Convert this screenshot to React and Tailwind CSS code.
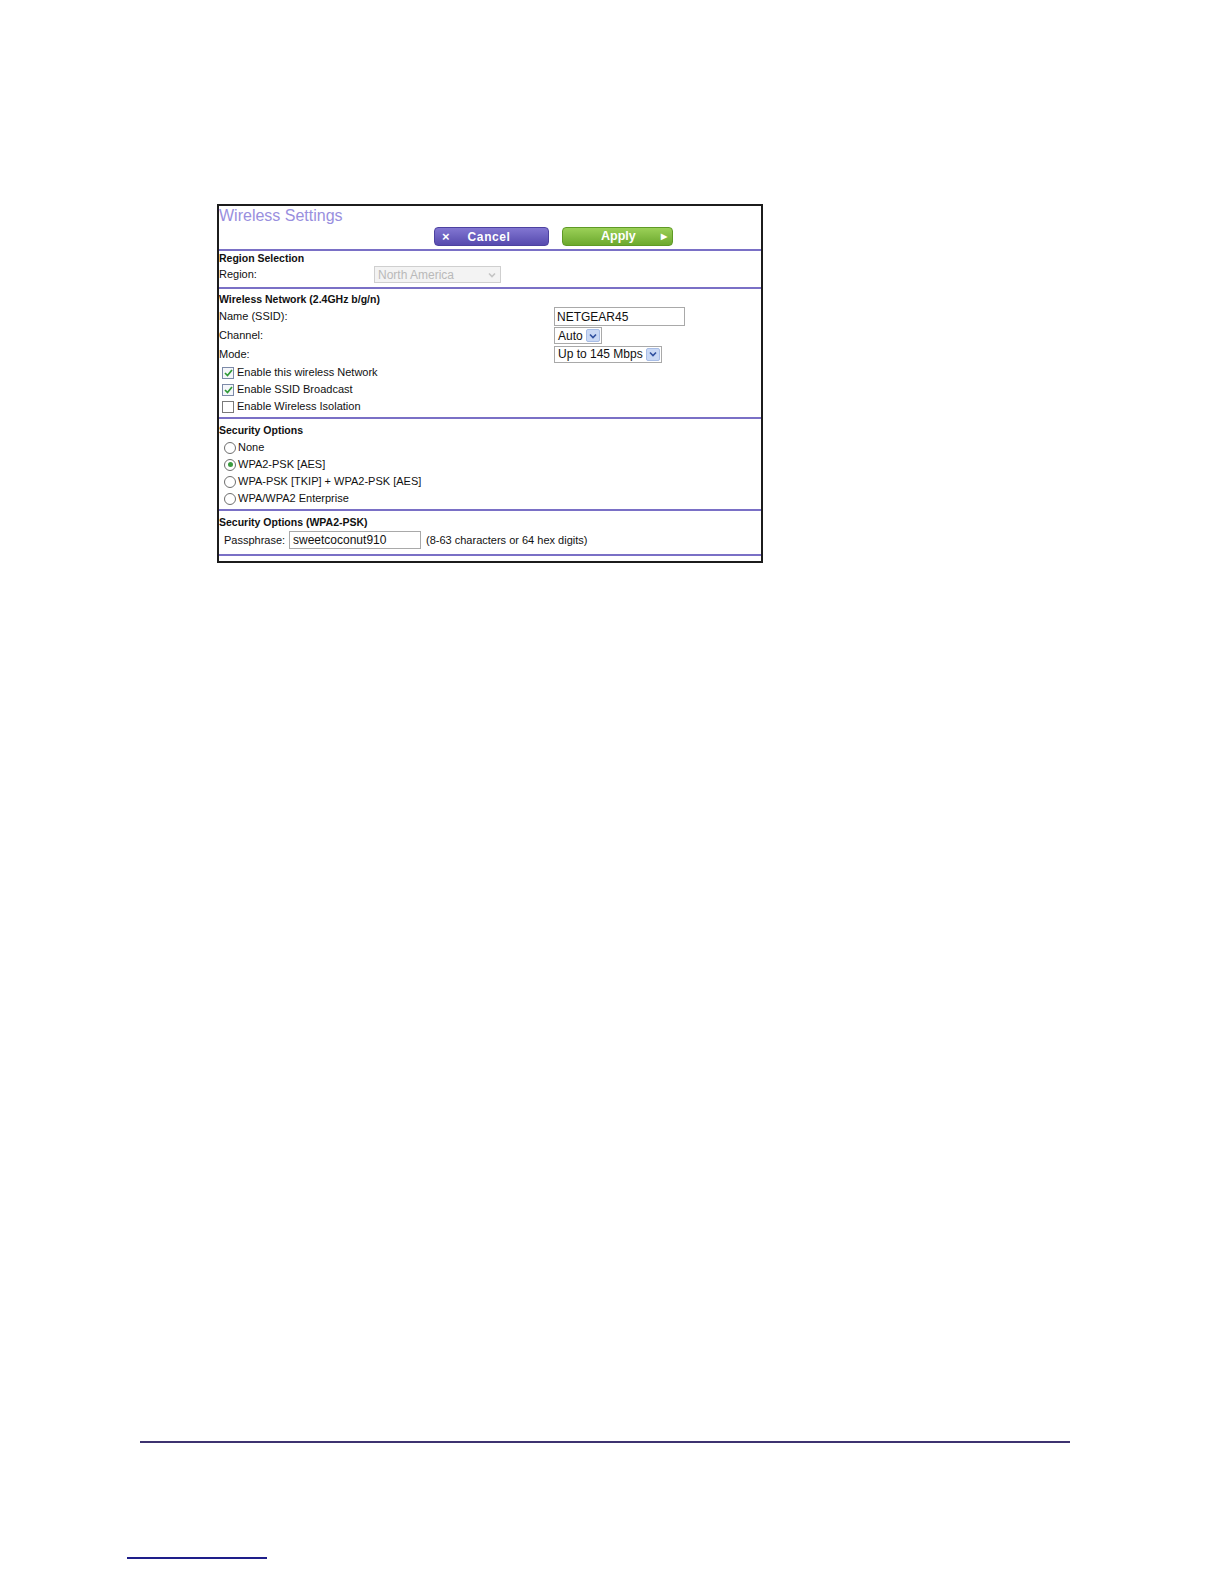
import React from "react";

const font = { fontFamily: '"Liberation Sans", Arial, sans-serif' };

function Line() {
  return <div className="h-[2px] bg-[#7a70c6] w-full" />;
}

function Arrow({ disabled }) {
  return (
    <div
      className={
        "h-[13px] w-[14px] flex items-center justify-center rounded-[2px] " +
        (disabled ? "bg-transparent" : "bg-[#c9d8f4] border border-[#a8bde6]")
      }
    >
      <svg width="8" height="6" viewBox="0 0 8 6">
        <path
          d="M1 1.5 L4 4.5 L7 1.5"
          fill="none"
          stroke={disabled ? "#c4c4c4" : "#2f4f9e"}
          strokeWidth="1.6"
        />
      </svg>
    </div>
  );
}

function Select({ value, w, disabled }) {
  return (
    <div
      className={
        "h-[17px] flex items-center justify-between border pl-[3px] pr-[1px] " +
        w +
        (disabled
          ? " border-[#cfcfcf] bg-[#f3f3f3] text-[#b9b9b9]"
          : " border-[#a9a9a9] bg-white text-[#111]")
      }
    >
      <span className="text-[12px]">{value}</span>
      <Arrow disabled={disabled} />
    </div>
  );
}

function Checkbox({ checked, label }) {
  return (
    <div className="h-[17px] flex items-center">
      <div
        className={
          "ml-[3px] w-[12px] h-[12px] border flex items-center justify-center " +
          (checked ? "border-[#7c8aa8] bg-[#f4f6fa]" : "border-[#7a7a7a] bg-white")
        }
      >
        {checked && (
          <svg width="9" height="8" viewBox="0 0 9 8">
            <path d="M1 4 L3.5 6.5 L8 1" fill="none" stroke="#2f9a36" strokeWidth="1.7" />
          </svg>
        )}
      </div>
      <span className="ml-[3px] text-[11px]">{label}</span>
    </div>
  );
}

function Radio({ checked, label }) {
  return (
    <div className="h-[17px] flex items-center">
      <div className="ml-[5px] w-[12px] h-[12px] rounded-full border border-[#6e6e6e] bg-white flex items-center justify-center">
        {checked && <div className="w-[5px] h-[5px] rounded-full bg-[#3a9a3e]" />}
      </div>
      <span className="ml-[2px] text-[11px]">{label}</span>
    </div>
  );
}

export default function App() {
  return (
    <div className="bg-white text-[#111] flex flex-col pt-[204px]" style={font}>
      <div className="ml-[217px] w-[546px] border-2 border-[#1c1c1c] flex flex-col">
        {/* Title */}
        <div className="h-[20px] flex items-center text-[16px] text-[#998fde] leading-none">
          Wireless Settings
        </div>
        <div className="mt-[1px] h-[19px] flex items-center pl-[215px]">
          <div className="w-[115px] h-[19px] rounded-[4px] border border-[#4d42a0] bg-gradient-to-b from-[#8276d2] to-[#574aae] flex items-center text-white font-bold">
            <span className="ml-[7px] text-[13px] leading-none">×</span>
            <span className="ml-[18px] text-[12px] tracking-[0.6px] leading-none">Cancel</span>
          </div>
          <div className="ml-[13px] w-[111px] h-[19px] rounded-[4px] border border-[#5f9a26] bg-gradient-to-b from-[#9bd057] to-[#6ca92d] flex items-center text-white font-bold">
            <span className="ml-[38px] text-[12.5px] leading-none">Apply</span>
            <span className="ml-[25px] text-[8px] leading-none">▶</span>
          </div>
        </div>
        <div className="h-[3px]" />
        <Line />

        {/* Region */}
        <div className="h-[15px] flex items-center text-[10.5px] font-bold">Region Selection</div>
        <div className="h-[17px] flex items-center text-[11px]">
          <span className="w-[155px]">Region:</span>
          <Select value="North America" w="w-[127px]" disabled />
        </div>
        <div className="h-[4px]" />
        <Line />

        {/* Wireless network */}
        <div className="h-[18px] pt-[4px] flex items-center text-[10.5px] font-bold">
          Wireless Network (2.4GHz b/g/n)
        </div>
        <div className="h-[19px] flex items-center text-[11px]">
          <span className="w-[335px]">Name (SSID):</span>
          <div className="w-[131px] h-[19px] border border-[#a9a9a9] flex items-center pl-[2px] text-[12px]">
            NETGEAR45
          </div>
        </div>
        <div className="h-[19px] flex items-center text-[11px]">
          <span className="w-[335px]">Channel:</span>
          <Select value="Auto" w="w-[48px]" />
        </div>
        <div className="h-[18px] flex items-center text-[11px]">
          <span className="w-[335px]">Mode:</span>
          <Select value="Up to 145 Mbps" w="w-[108px]" />
        </div>
        <div className="h-[1px]" />
        <Checkbox checked label="Enable this wireless Network" />
        <Checkbox checked label="Enable SSID Broadcast" />
        <Checkbox label="Enable Wireless Isolation" />
        <div className="h-[2px]" />
        <Line />

        {/* Security options */}
        <div className="h-[20px] pt-[4px] flex items-center text-[10.5px] font-bold">Security Options</div>
        <Radio label="None" />
        <Radio checked label="WPA2-PSK [AES]" />
        <Radio label="WPA-PSK [TKIP] + WPA2-PSK [AES]" />
        <Radio label="WPA/WPA2 Enterprise" />
        <div className="h-[2px]" />
        <Line />

        {/* WPA2 */}
        <div className="h-[20px] pt-[4px] flex items-center text-[10.5px] font-bold">
          Security Options (WPA2-PSK)
        </div>
        <div className="h-[18px] flex items-center text-[11px]">
          <span className="ml-[5px] w-[65px]">Passphrase:</span>
          <div className="w-[132px] h-[18px] border border-[#a9a9a9] flex items-center pl-[3px] text-[12px]">
            sweetcoconut910
          </div>
          <span className="ml-[5px]">(8-63 characters or 64 hex digits)</span>
        </div>
        <div className="h-[5px]" />
        <Line />
        <div className="h-[5px]" />
      </div>

      <div className="mt-[878px] ml-[140px] w-[930px] h-[2px] bg-[#3d3270]" />
      <div className="mt-[114px] ml-[127px] w-[140px] h-[2px] bg-[#1e1e8a]" />
    </div>
  );
}
